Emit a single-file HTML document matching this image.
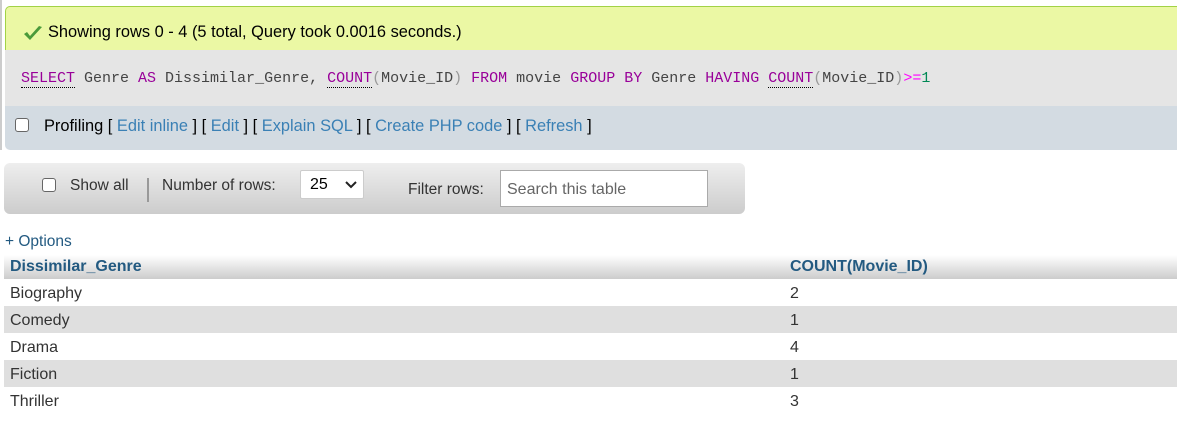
<!DOCTYPE html>
<html><head><style>
body{margin:0;width:1177px;height:426px;background:#fff;font-family:"Liberation Sans",Arial,sans-serif;position:relative;overflow:hidden;color:#000}
.a{position:absolute}
.kw{color:#909}
.fn{color:#909;border-bottom:1px dotted #000}
.pr{color:#999}
</style></head><body>
<div class="a" style="left:0;top:0;width:2px;height:150px;background:#ccc"></div>
<div class="a" style="left:5px;top:6px;width:1172px;height:44px;background:#ebf8a4;border-top:1px solid #a2d246;border-left:1px solid #a2d246;box-sizing:border-box;border-top-left-radius:5px"></div>
<svg class="a" style="left:22px;top:24px" width="22" height="18" viewBox="0 0 22 18"><path d="M2 10 L8 16 L20 3 L17 2 L8 12 L5 8 Z" fill="#4a9a3a"/></svg>
<div class="a" style="left:48px;top:23px;font-size:16.4px">Showing rows 0 - 4 (5 total, Query took 0.0016 seconds.)</div>
<div class="a" style="left:5px;top:50px;width:1172px;height:56px;background:#e5e5e5"></div>
<div class="a" style="left:21px;top:70px;font-family:'Liberation Mono',monospace;font-size:15px;color:#444;white-space:pre"><span class="fn">SELECT</span> Genre <span class="kw">AS</span> Dissimilar_Genre, <span class="fn">COUNT</span><span class="pr">(</span>Movie_ID<span class="pr">)</span> <span class="kw">FROM</span> movie <span class="kw">GROUP BY</span> Genre <span class="kw">HAVING</span> <span class="fn">COUNT</span><span class="pr">(</span>Movie_ID<span class="pr">)</span><span style="color:#f0f">&gt;=</span><span style="color:#085">1</span></div>
<div class="a" style="left:5px;top:106px;width:1172px;height:44px;background:#d3dbe2;border-bottom-left-radius:5px"></div>
<div class="a" style="left:15px;top:118px;width:14px;height:14px;border:1px solid #666;border-radius:3px;background:#fff;box-sizing:border-box"></div>
<div class="a" style="left:44px;top:117px;font-size:16.4px;color:#000">Profiling [ <span style="color:#3a80b5">Edit inline</span> ] [ <span style="color:#3a80b5">Edit</span> ] [ <span style="color:#3a80b5">Explain SQL</span> ] [ <span style="color:#3a80b5">Create PHP code</span> ] [ <span style="color:#3a80b5">Refresh</span> ]</div>

<div class="a" style="left:4px;top:163px;width:741px;height:51px;border-radius:6px;background:linear-gradient(#eee,#ccc)"></div>
<div class="a" style="left:42px;top:178px;width:14px;height:14px;border:1px solid #666;border-radius:3px;background:#fff;box-sizing:border-box"></div>
<div class="a" style="left:70px;top:177px;font-size:15.5px;color:#333">Show all</div>
<div class="a" style="left:147px;top:178px;width:2px;height:24px;background:#999"></div>
<div class="a" style="left:162px;top:177px;font-size:15.5px;color:#333">Number of rows:</div>
<div class="a" style="left:300px;top:170px;width:64px;height:29px;background:#fff;border:1px solid #ccc;border-radius:2px;box-sizing:border-box"></div>
<div class="a" style="left:310px;top:176px;font-size:16px;color:#000">25</div>
<svg class="a" style="left:345px;top:181px" width="12" height="8"><path d="M1 1 L6 6 L11 1" stroke="#222" stroke-width="2" fill="none"/></svg>
<div class="a" style="left:408px;top:181px;font-size:15.5px;color:#333">Filter rows:</div>
<div class="a" style="left:500px;top:170px;width:208px;height:37px;background:#fff;border:1px solid #aaa;box-sizing:border-box"></div>
<div class="a" style="left:507px;top:181px;font-size:16px;color:#666">Search this table</div>

<div class="a" style="left:5px;top:233px;font-size:15.5px;color:#235a81">+ Options</div>
<div class="a" style="left:4px;top:255px;width:1173px;height:24px;background:linear-gradient(#fff,#ccc)"></div>
<div class="a" style="left:10px;top:258px;font-size:16px;font-weight:bold;color:#235a81">Dissimilar_Genre</div>
<div class="a" style="left:790px;top:258px;font-size:16px;font-weight:bold;color:#235a81">COUNT(Movie_ID)</div>
<div class="a" style="left:4px;top:279px;width:1173px;height:135px;font-size:16px;color:#333">
<div style="height:27px;background:#fff;position:relative"><span class="a" style="left:6px;top:6px">Biography</span><span class="a" style="left:786px;top:6px">2</span></div>
<div style="height:27px;background:#dfdfdf;position:relative"><span class="a" style="left:6px;top:6px">Comedy</span><span class="a" style="left:786px;top:6px">1</span></div>
<div style="height:27px;background:#fff;position:relative"><span class="a" style="left:6px;top:6px">Drama</span><span class="a" style="left:786px;top:6px">4</span></div>
<div style="height:27px;background:#dfdfdf;position:relative"><span class="a" style="left:6px;top:6px">Fiction</span><span class="a" style="left:786px;top:6px">1</span></div>
<div style="height:27px;background:#fff;position:relative"><span class="a" style="left:6px;top:6px">Thriller</span><span class="a" style="left:786px;top:6px">3</span></div>
</div>
</body></html>
